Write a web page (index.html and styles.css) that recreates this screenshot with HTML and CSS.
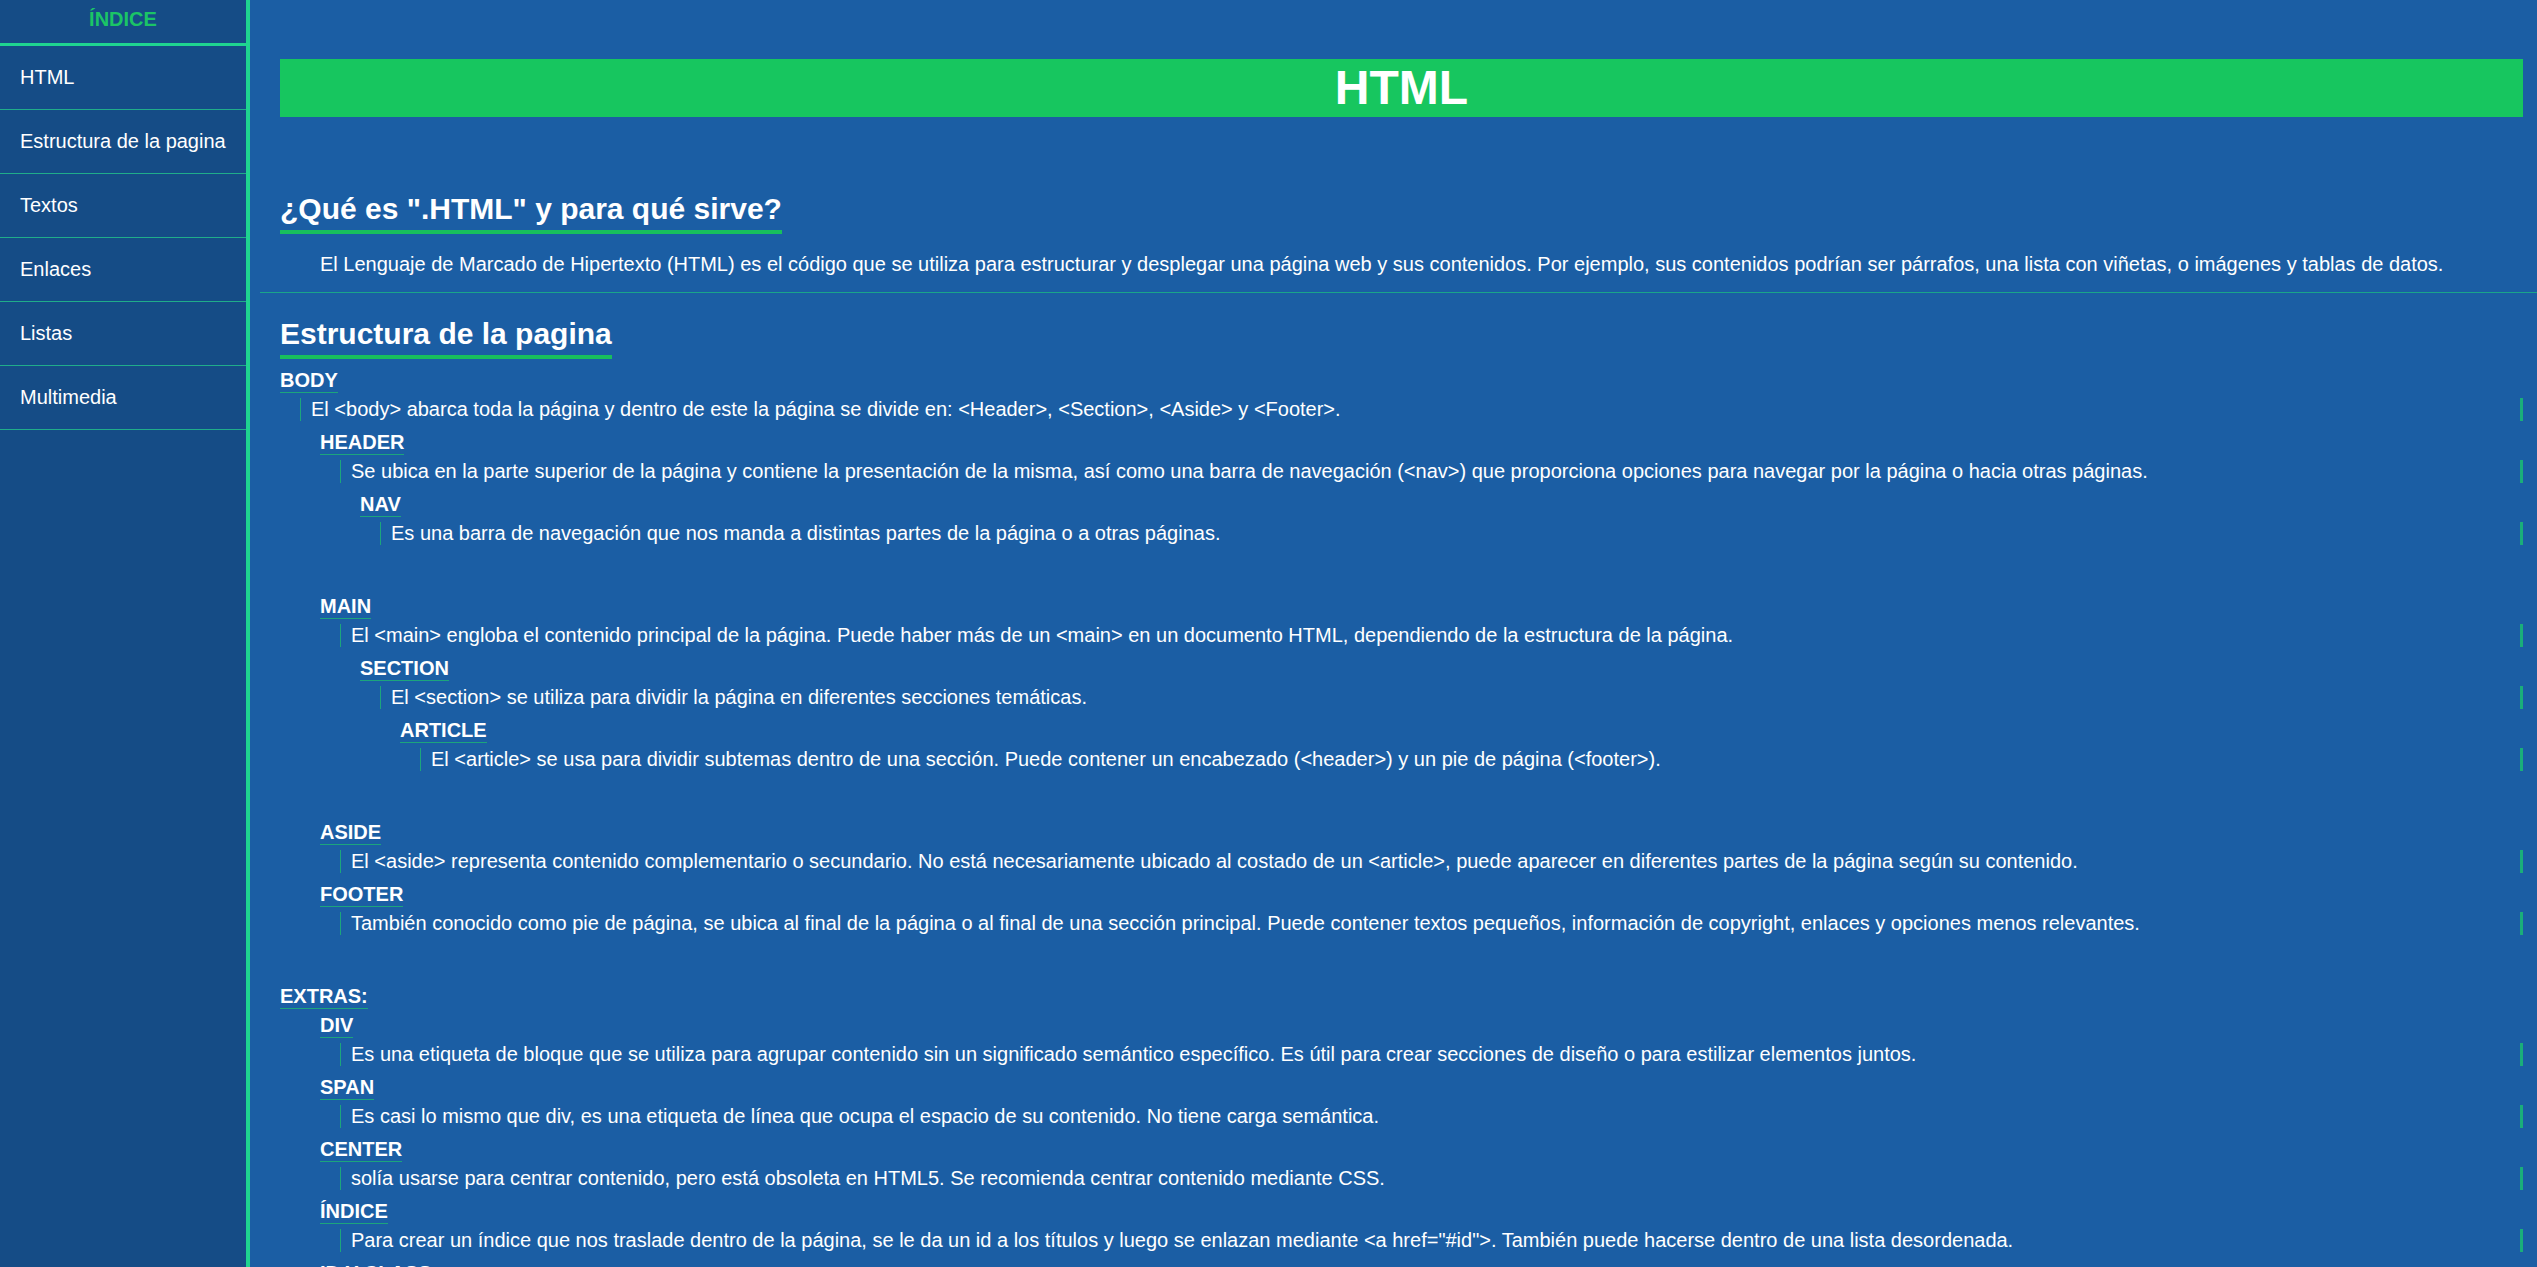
FILE: index.html
```html
<!DOCTYPE html>
<html lang="es">
<head>
<meta charset="utf-8">
<title>HTML</title>
<link rel="stylesheet" href="styles.css">
</head>
<body>
<aside class="sidebar">
  <div class="sidebar-title">ÍNDICE</div>
  <nav class="menu">
    <a class="menu-item" href="#html">HTML</a>
    <a class="menu-item" href="#estructura">Estructura de la pagina</a>
    <a class="menu-item" href="#textos">Textos</a>
    <a class="menu-item" href="#enlaces">Enlaces</a>
    <a class="menu-item" href="#listas">Listas</a>
    <a class="menu-item" href="#multimedia">Multimedia</a>
  </nav>
</aside>
<main class="content">
  <h1 class="banner" id="html">HTML</h1>

  <h2 class="title title-first">¿Qué es ".HTML" y para qué sirve?</h2>
  <p class="intro">El Lenguaje de Marcado de Hipertexto (HTML) es el código que se utiliza para estructurar y desplegar una página web y sus contenidos. Por ejemplo, sus contenidos podrían ser párrafos, una lista con viñetas, o imágenes y tablas de datos.</p>

  <hr class="divider">

  <h2 class="title" id="estructura">Estructura de la pagina</h2>

  <div class="node group">
    <h4 class="tag">BODY</h4>
    <p class="desc">El &lt;body&gt; abarca toda la página y dentro de este la página se divide en: &lt;Header&gt;, &lt;Section&gt;, &lt;Aside&gt; y &lt;Footer&gt;.</p>

    <div class="node sub group">
      <h4 class="tag">HEADER</h4>
      <p class="desc">Se ubica en la parte superior de la página y contiene la presentación de la misma, así como una barra de navegación (&lt;nav&gt;) que proporciona opciones para navegar por la página o hacia otras páginas.</p>
      <div class="node sub">
        <h4 class="tag">NAV</h4>
        <p class="desc">Es una barra de navegación que nos manda a distintas partes de la página o a otras páginas.</p>
      </div>
    </div>

    <div class="node sub group">
      <h4 class="tag">MAIN</h4>
      <p class="desc">El &lt;main&gt; engloba el contenido principal de la página. Puede haber más de un &lt;main&gt; en un documento HTML, dependiendo de la estructura de la página.</p>
      <div class="node sub">
        <h4 class="tag">SECTION</h4>
        <p class="desc">El &lt;section&gt; se utiliza para dividir la página en diferentes secciones temáticas.</p>
        <div class="node sub">
          <h4 class="tag">ARTICLE</h4>
          <p class="desc">El &lt;article&gt; se usa para dividir subtemas dentro de una sección. Puede contener un encabezado (&lt;header&gt;) y un pie de página (&lt;footer&gt;).</p>
        </div>
      </div>
    </div>

    <div class="node sub">
      <h4 class="tag">ASIDE</h4>
      <p class="desc">El &lt;aside&gt; representa contenido complementario o secundario. No está necesariamente ubicado al costado de un &lt;article&gt;, puede aparecer en diferentes partes de la página según su contenido.</p>
    </div>
    <div class="node sub">
      <h4 class="tag">FOOTER</h4>
      <p class="desc">También conocido como pie de página, se ubica al final de la página o al final de una sección principal. Puede contener textos pequeños, información de copyright, enlaces y opciones menos relevantes.</p>
    </div>
  </div>

  <div class="node">
    <h4 class="tag">EXTRAS:</h4>
    <div class="node sub">
      <h4 class="tag">DIV</h4>
      <p class="desc">Es una etiqueta de bloque que se utiliza para agrupar contenido sin un significado semántico específico. Es útil para crear secciones de diseño o para estilizar elementos juntos.</p>
    </div>
    <div class="node sub">
      <h4 class="tag">SPAN</h4>
      <p class="desc">Es casi lo mismo que div, es una etiqueta de línea que ocupa el espacio de su contenido. No tiene carga semántica.</p>
    </div>
    <div class="node sub">
      <h4 class="tag">CENTER</h4>
      <p class="desc">solía usarse para centrar contenido, pero está obsoleta en HTML5. Se recomienda centrar contenido mediante CSS.</p>
    </div>
    <div class="node sub">
      <h4 class="tag">ÍNDICE</h4>
      <p class="desc">Para crear un índice que nos traslade dentro de la página, se le da un id a los títulos y luego se enlazan mediante &lt;a href="#id"&gt;. También puede hacerse dentro de una lista desordenada.</p>
    </div>
    <div class="node sub">
      <h4 class="tag">ID Y CLASS</h4>
      <p class="desc">Sirven para identificar elementos y darles estilos desde CSS.</p>
    </div>
  </div>
</main>
</body>
</html>
```

FILE: styles.css
```css
* {
  box-sizing: border-box;
}

html, body {
  margin: 0;
  padding: 0;
}

body {
  display: flex;
  align-items: flex-start;
  background: #1b5ea4;
  color: #ffffff;
  font-family: "Liberation Sans", Arial, sans-serif;
  font-size: 20px;
  line-height: 23px;
}

/* Sidebar */
.sidebar {
  position: sticky;
  top: 0;
  flex: 0 0 250px;
  width: 250px;
  height: 100vh;
  background: #154c86;
  border-right: 4px solid #1fd490;
}

.sidebar-title {
  height: 46px;
  padding-top: 8px;
  text-align: center;
  font-weight: bold;
  color: #1bc466;
  border-bottom: 3px solid #1fd490;
}

.menu {
  display: flex;
  flex-direction: column;
}

.menu-item {
  display: block;
  height: 64px;
  line-height: 63px;
  padding-left: 20px;
  color: #ffffff;
  text-decoration: none;
  border-bottom: 1px solid #20ad8a;
}

/* Main content */
.content {
  flex: 1 1 auto;
  min-width: 0;
  padding: 59px 14px 40px 30px;
}

.banner {
  margin: 0;
  height: 58px;
  line-height: 58px;
  background: #17c65f;
  color: #ffffff;
  font-size: 48px;
  font-weight: bold;
  text-align: center;
}

.title {
  width: fit-content;
  margin: 0;
  font-size: 30px;
  line-height: 34px;
  font-weight: bold;
  padding-bottom: 4px;
  border-bottom: 4px solid #18bf5d;
}

.title-first {
  margin-top: 75px;
}

.intro {
  margin: 19px 0 0 40px;
}

.divider {
  margin: 16px -14px 24px -20px;
  border: 0;
  border-top: 1px solid #1aa58a;
  height: 0;
}

.title + .node {
  margin-top: 10px;
}

.node {
  display: flex;
  flex-direction: column;
  align-items: stretch;
}

.sub {
  margin-left: 40px;
}

.group {
  margin-bottom: 40px;
}

.tag {
  align-self: flex-start;
  margin: 0 0 5px 0;
  font-size: 20px;
  line-height: 23px;
  font-weight: bold;
  border-bottom: 1px solid #1ca57c;
}

.desc {
  margin: 0 0 10px 20px;
  padding-left: 10px;
  border-left: 1px solid #1ca57c;
  border-right: 3px solid #1aae7a;
}
```
